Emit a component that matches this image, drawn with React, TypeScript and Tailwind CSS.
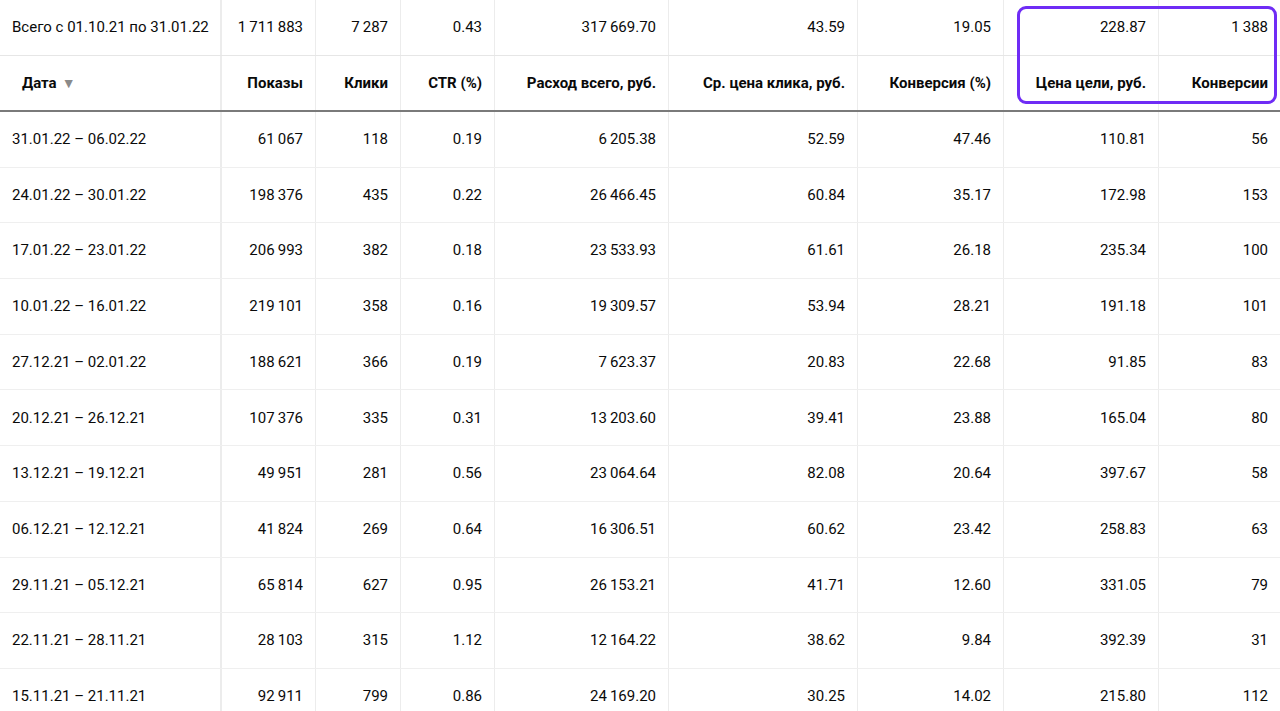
import React from 'react'

// ── Data ────────────────────────────────────────────────────────────────────

const T = '\u2009'

const summary = [
  'Всего с 01.10.21 по 31.01.22',
  `1${T}711${T}883`,
  `7${T}287`,
  '0.43',
  `317${T}669.70`,
  '43.59',
  '19.05',
  '228.87',
  `1${T}388`,
]

const headers = [
  'Показы',
  'Клики',
  'CTR (%)',
  'Расход всего, руб.',
  'Ср. цена клика, руб.',
  'Конверсия (%)',
  'Цена цели, руб.',
  'Конверсии',
]

const rows: string[][] = [
  ['31.01.22 – 06.02.22', `61${T}067`, '118', '0.19', `6${T}205.38`, '52.59', '47.46', '110.81', '56'],
  ['24.01.22 – 30.01.22', `198${T}376`, '435', '0.22', `26${T}466.45`, '60.84', '35.17', '172.98', '153'],
  ['17.01.22 – 23.01.22', `206${T}993`, '382', '0.18', `23${T}533.93`, '61.61', '26.18', '235.34', '100'],
  ['10.01.22 – 16.01.22', `219${T}101`, '358', '0.16', `19${T}309.57`, '53.94', '28.21', '191.18', '101'],
  ['27.12.21 – 02.01.22', `188${T}621`, '366', '0.19', `7${T}623.37`, '20.83', '22.68', '91.85', '83'],
  ['20.12.21 – 26.12.21', `107${T}376`, '335', '0.31', `13${T}203.60`, '39.41', '23.88', '165.04', '80'],
  ['13.12.21 – 19.12.21', `49${T}951`, '281', '0.56', `23${T}064.64`, '82.08', '20.64', '397.67', '58'],
  ['06.12.21 – 12.12.21', `41${T}824`, '269', '0.64', `16${T}306.51`, '60.62', '23.42', '258.83', '63'],
  ['29.11.21 – 05.12.21', `65${T}814`, '627', '0.95', `26${T}153.21`, '41.71', '12.60', '331.05', '79'],
  ['22.11.21 – 28.11.21', `28${T}103`, '315', '1.12', `12${T}164.22`, '38.62', '9.84', '392.39', '31'],
  ['15.11.21 – 21.11.21', `92${T}911`, '799', '0.86', `24${T}169.20`, '30.25', '14.02', '215.80', '112'],
]

const grid =
  'grid grid-cols-[222px_94px_85px_94px_174px_189px_146px_155px_121px]'

// ── Cells ───────────────────────────────────────────────────────────────────

function Cell({
  children,
  index,
  bold = false,
}: {
  children: React.ReactNode
  index: number
  bold?: boolean
}) {
  const first = index === 0
  const last = index === 8
  return (
    <div
      className={[
        'flex items-center whitespace-nowrap',
        first ? 'justify-start pl-3' : 'justify-end pr-3',
        last ? '' : first ? 'border-r-2 border-[#ececec]' : 'border-r border-[#ececec]',
        bold ? 'font-bold' : '',
      ].join(' ')}
    >
      {children}
    </div>
  )
}

// ── Component ───────────────────────────────────────────────────────────────

export default function App() {
  return (
    <div
      className="relative h-[711px] w-[1280px] overflow-hidden bg-white text-[15px] text-[#0a0a0a]"
      style={{ fontFamily: 'Roboto, "Noto Sans", sans-serif' }}
    >
      {/* Totals row */}
      <div className={`${grid} h-[56px] border-b border-[#e6e6e6]`}>
        {summary.map((v, i) => (
          <Cell key={i} index={i}>
            {v}
          </Cell>
        ))}
      </div>

      {/* Header row */}
      <div className={`${grid} h-[56px] border-b-2 border-[#7a7a7a]`}>
        <Cell index={0} bold>
          <span className="pl-[10px]">Дата</span>
          <span className="ml-[5px] text-[14px] leading-none text-[#8a8a8a]">▼</span>
        </Cell>
        {headers.map((h, i) => (
          <Cell key={h} index={i + 1} bold>
            {h}
          </Cell>
        ))}
      </div>

      {/* Body rows */}
      {rows.map((r) => (
        <div key={r[0]} className={`${grid} h-[55.7px] border-b border-[#efefef]`}>
          {r.map((v, i) => (
            <Cell key={i} index={i}>
              {v}
            </Cell>
          ))}
        </div>
      ))}

      {/* Highlight frame over the last two columns */}
      <div className="pointer-events-none absolute left-[1017px] top-[6px] h-[98px] w-[260px] rounded-[9px] border-[3px] border-[#6f2cf5]" />
    </div>
  )
}
